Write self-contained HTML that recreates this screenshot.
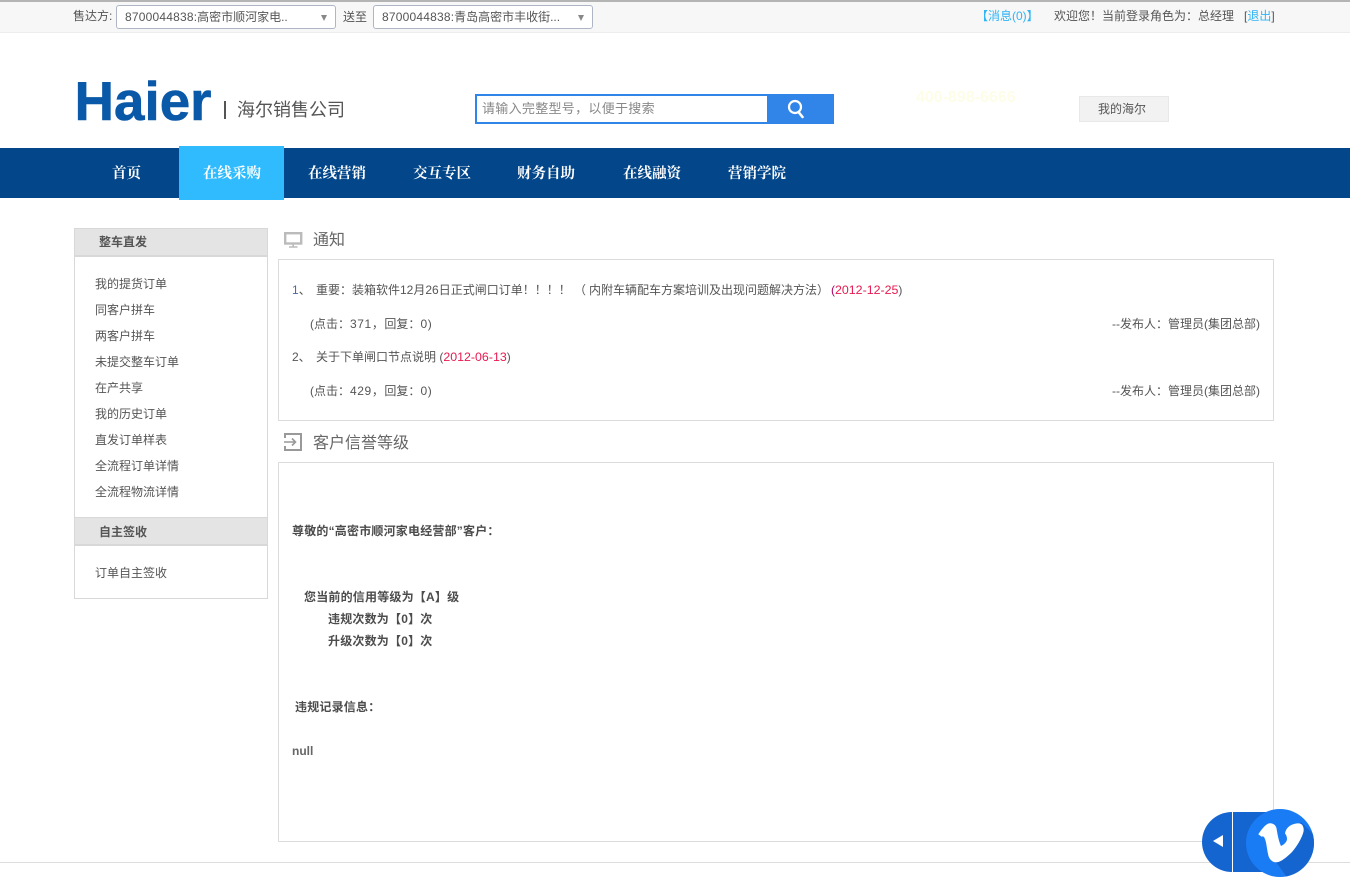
<!DOCTYPE html>
<html lang="zh-CN"><head><meta charset="utf-8"><title>海尔销售公司</title>
<style>
html,body{margin:0;padding:0;background:#fff}
body{width:1350px;height:874px;position:relative;overflow:hidden;font-family:"Liberation Sans","WenQuanYi Zen Hei","Noto Sans CJK SC",sans-serif;font-size:12px;color:#555}
.a{position:absolute;white-space:nowrap}
.b{position:absolute;box-sizing:border-box}
.sel{position:absolute;top:5px;height:24px;box-sizing:border-box;border:1px solid #aeb6c6;border-radius:3px;background:#fff;color:#555;line-height:22px;padding-left:8px;white-space:nowrap}
.sel b{font-weight:normal;letter-spacing:.2px}
.sel i{position:absolute;right:8px;top:9px;width:0;height:0;border:3.5px solid transparent;border-top:6px solid #888;border-bottom:0}
.nav{position:absolute;top:165px;color:#fff;font-family:"Liberation Serif","Noto Serif CJK SC",serif;font-weight:bold;font-size:14.5px;line-height:18px;white-space:nowrap}
.m{position:absolute;left:95px;color:#555;line-height:16px;white-space:nowrap}
.h{position:absolute;left:75px;width:192px;background:#e4e4e4;color:#555;font-weight:bold;font-size:12px;box-sizing:border-box;padding-left:24px}
.t{font-size:16px;color:#666;line-height:20px;position:absolute;white-space:nowrap}
.r{color:#e8194f;font-size:12.4px}
.n{letter-spacing:.6px}
.bd{font-weight:bold;color:#4c4c4c;font-size:12px;line-height:16px;position:absolute;white-space:nowrap;letter-spacing:.2px}
</style></head><body>
<div class="b" style="left:0;top:0;width:1350px;height:33px;background:#f7f7f7;border-top:2px solid #b4b4b4;border-bottom:1px solid #ececec"></div>
<div class="a" style="left:73px;top:8px;line-height:16px">售达方:</div>
<div class="sel" style="left:116px;width:220px"><b>8700044838</b>:高密市顺河家电..<i></i></div>
<div class="a" style="left:343px;top:9px;line-height:16px">送至</div>
<div class="sel" style="left:373px;width:220px"><b>8700044838</b>:青岛高密市丰收街...<i></i></div>
<div class="a" style="left:976px;top:8px;line-height:16px;color:#2fb4f5">【消息(0)】</div>
<div class="a" style="left:1054px;top:8px;line-height:16px">欢迎您！当前登录角色为：总经理</div>
<div class="a" style="left:1244px;top:8px;line-height:16px">[<span style="color:#2fb4f5">退出</span>]</div>

<svg class="a" style="left:70px;top:70px" width="150" height="60"><text x="4.5" y="50" textLength="137" lengthAdjust="spacingAndGlyphs" font-family="Liberation Sans" font-weight="bold" font-size="55" fill="#0a58a8" stroke="#0a58a8" stroke-width=".6">Haier</text></svg>
<div class="b" style="left:224px;top:101px;width:2px;height:18px;background:#555"></div>
<div class="a" style="left:237px;top:98px;font-size:18px;line-height:24px;color:#555">海尔销售公司</div>

<div class="b" style="left:475px;top:94px;width:359px;height:30px;border:2px solid #3184e8;background:#fff"></div>
<div class="b" style="left:767px;top:94px;width:67px;height:30px;background:#3184e8"></div>
<svg class="a" style="left:786px;top:98px" width="20" height="22" viewBox="0 0 20 22"><circle cx="9" cy="9" r="6" fill="none" stroke="#fff" stroke-width="2.2"/><path d="M12.5 14l4 5" stroke="#fff" stroke-width="2.6" stroke-linecap="round"/></svg>
<div class="a" style="left:482px;top:100px;font-size:13px;line-height:17px;color:#888;letter-spacing:.3px">请输入完整型号，以便于搜索</div>
<div class="a" style="left:916px;top:89px;font-size:16px;font-weight:bold;color:#fdfde8;line-height:17px">400-898-6666</div>
<div class="b" style="left:1079px;top:96px;width:90px;height:26px;background:#f2f2f2;border:1px solid #e8e8e8;line-height:25px;color:#555;padding-left:18px">我的海尔</div>

<div class="b" style="left:0;top:148px;width:1350px;height:50px;background:#03468a"></div>
<div class="b" style="left:179px;top:146px;width:105px;height:54px;background:#30bbff"></div>
<div class="nav" style="left:112px">首页</div>
<div class="nav" style="left:203px">在线采购</div>
<div class="nav" style="left:308px">在线营销</div>
<div class="nav" style="left:413px">交互专区</div>
<div class="nav" style="left:517px">财务自助</div>
<div class="nav" style="left:623px">在线融资</div>
<div class="nav" style="left:728px">营销学院</div>

<div class="b" style="left:74px;top:228px;width:194px;height:371px;border:1px solid #d8d8d8;background:#fff"></div>
<div class="h" style="top:229px;height:28px;line-height:27px;border-bottom:2px solid #d8d8d8">整车直发</div>
<div class="m" style="top:276px">我的提货订单</div>
<div class="m" style="top:302px">同客户拼车</div>
<div class="m" style="top:328px">两客户拼车</div>
<div class="m" style="top:354px">未提交整车订单</div>
<div class="m" style="top:380px">在产共享</div>
<div class="m" style="top:406px">我的历史订单</div>
<div class="m" style="top:432px">直发订单样表</div>
<div class="m" style="top:458px">全流程订单详情</div>
<div class="m" style="top:484px">全流程物流详情</div>
<div class="h" style="top:517px;height:29px;line-height:28px;border-top:1px solid #d8d8d8;border-bottom:2px solid #d8d8d8">自主签收</div>
<div class="m" style="top:565px">订单自主签收</div>

<svg class="a" style="left:284px;top:232px" width="19" height="16" viewBox="0 0 19 16"><rect x="1.2" y="1.2" width="16" height="10.3" fill="none" stroke="#bbb" stroke-width="2.4"/><path d="M9.2 12.5v2M5 15h8.500" stroke="#bbb" stroke-width="1.6"/></svg>
<div class="t" style="left:313px;top:231px">通知</div>
<div class="b" style="left:278px;top:259px;width:996px;height:162px;border:1px solid #dcdcdc"></div>
<div class="a" style="left:292px;top:282px;line-height:16px"><span style="color:#4a6a9a">1</span>、</div>
<div class="a" style="left:316px;top:282px;line-height:16px">重要：装箱软件12月26日正式闸口订单！！！！</div>
<div class="a" style="left:574px;top:282px;line-height:16px">（</div>
<div class="a" style="left:589px;top:282px;line-height:16px">内附车辆配车方案培训及出现问题解决方法）</div>
<div class="a" style="left:831px;top:282px;line-height:16px"><span style="color:#a06">(</span><span class="r">2012-12-25</span>)</div>
<div class="a" style="left:310px;top:316px;line-height:16px">(点击：<span class="n">371，</span>回复：<span class="n">0</span>)</div>
<div class="a" style="left:1112px;top:316px;line-height:16px">--发布人：管理员(集团总部)</div>
<div class="a" style="left:292px;top:349px;line-height:16px">2、</div>
<div class="a" style="left:316px;top:349px;line-height:16px">关于下单闸口节点说明 (<span class="r">2012-06-13</span>)</div>
<div class="a" style="left:310px;top:383px;line-height:16px">(点击：<span class="n">429，</span>回复：<span class="n">0</span>)</div>
<div class="a" style="left:1112px;top:383px;line-height:16px">--发布人：管理员(集团总部)</div>

<svg class="a" style="left:284px;top:433px" width="18" height="18" viewBox="0 0 18 18"><path d="M1 5V1h16v16H1v-4" fill="none" stroke="#999" stroke-width="2"/><path d="M0 9h11M8 5.500L11.500 9 8 12.500" fill="none" stroke="#999" stroke-width="1.600"/></svg>
<div class="t" style="left:313px;top:434px">客户信誉等级</div>
<div class="b" style="left:278px;top:462px;width:996px;height:380px;border:1px solid #dcdcdc"></div>
<div class="bd" style="left:292px;top:523px">尊敬的“高密市顺河家电经营部”客户：</div>
<div class="bd" style="left:304px;top:589px">您当前的信用等级为【A】级</div>
<div class="bd" style="left:328px;top:611px">违规次数为【0】次</div>
<div class="bd" style="left:328px;top:633px">升级次数为【0】次</div>
<div class="bd" style="left:295px;top:699px">违规记录信息：</div>
<div class="a" style="left:292px;top:743px;line-height:16px;font-weight:bold;color:#666">null</div>

<div class="b" style="left:0;top:862px;width:1350px;height:1px;background:#ddd"></div>

<div class="b" style="left:1202px;top:812px;width:80px;height:60px;background:#1565d0;border-radius:30px 0 0 30px"></div>
<div class="b" style="left:1232px;top:812px;width:1px;height:60px;background:#fff"></div>
<div class="b" style="left:1213px;top:835px;width:0;height:0;border:6.500px solid transparent;border-right:10px solid #fff;border-left:0"></div>
<svg class="a" style="left:1246px;top:809px" width="68" height="68" viewBox="0 0 68 68"><defs><clipPath id="c"><circle cx="34" cy="34" r="34"/></clipPath></defs><circle cx="34" cy="34" r="34" fill="#1a7cf5"/><path d="M55 13L70 28V70H42L30 53Z" fill="#1565d0" clip-path="url(#c)"/><path d="M12.300 25.300C16 20 20 14.300 24 14.300C28 14.300 30 17 30.500 19.300C31.500 26 33 33 35 37C37.500 36 41 33 41 30C41 27.500 40 26 39 24.300C40 19 44 16 48 15C52 14 55.700 14 56.800 17C57.800 19 57.800 21 57.500 22.700C55.500 30 51 37 46 43C41 48 35 53 30.700 53.300C26 53.500 23.500 50 22.500 47C21 41 20.500 34 19 30C18 27.500 17 27 15.700 27.700Z" fill="#fff"/></svg>
</body></html>
